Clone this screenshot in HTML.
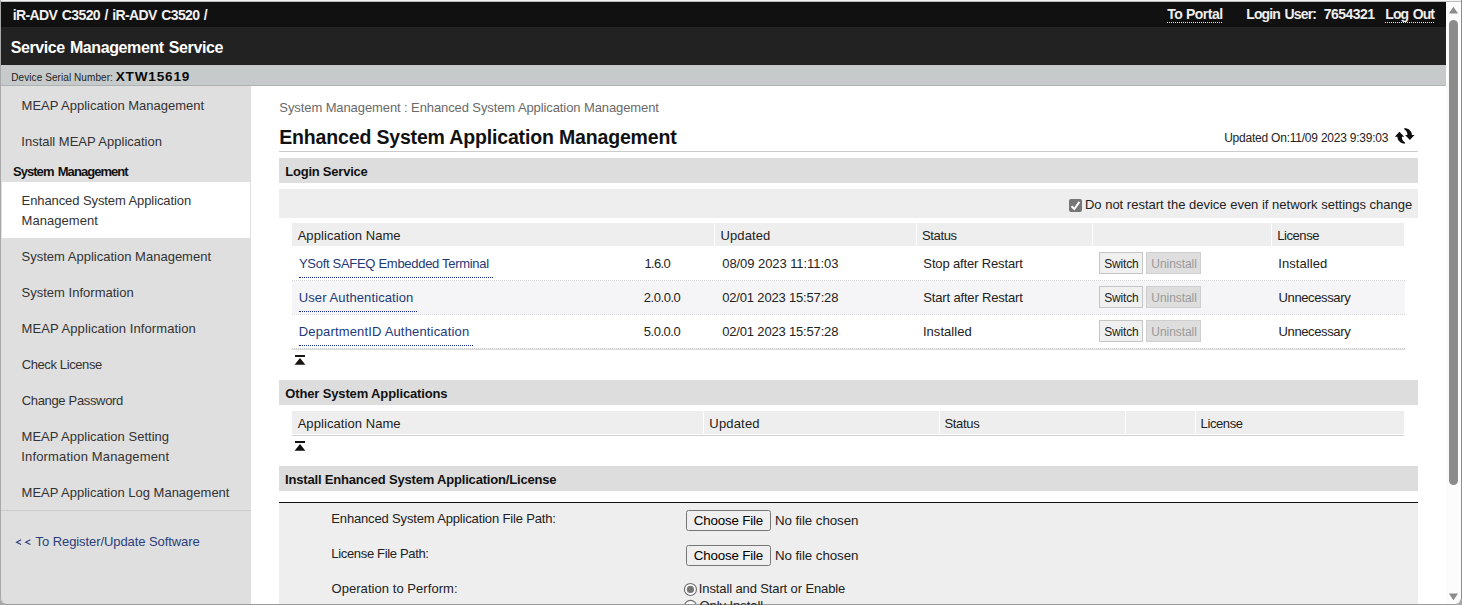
<!DOCTYPE html>
<html>
<head>
<meta charset="utf-8">
<title>Service Management Service</title>
<style>
html,body{margin:0;padding:0;}
body{width:1462px;height:605px;overflow:hidden;background:#fff;font-family:"Liberation Sans",sans-serif;}
#w{position:relative;width:1462px;height:605px;overflow:hidden;background:#fff;}
#w div,#w span,#w svg{position:absolute;box-sizing:border-box;}
.t{white-space:nowrap;font-family:"Liberation Sans",sans-serif;}
.btn{border:1px solid #c6c6c6;background:#f0f0f0;}
.btnd{border:1px solid #cfcfcf;background:#dedede;}
.fbtn{border:1px solid #767676;background:#efefef;border-radius:2.5px;}
.dul{height:1px;background:repeating-linear-gradient(90deg,#14298a 0,#14298a 1px,transparent 1px,transparent 2px);}
.dulw{height:1px;background:repeating-linear-gradient(90deg,#e4e4e4 0,#e4e4e4 1px,transparent 1px,transparent 2px);}
.rsep{height:1px;background:repeating-linear-gradient(90deg,#d8d8d8 0,#d8d8d8 1px,transparent 1px,transparent 2px);}
</style>
</head>
<body>
<div id="w">
<!-- header -->
<div style="left:0;top:2px;width:1446px;height:25px;background:#111111;"></div>
<div style="left:0;top:27px;width:1446px;height:38px;background:#222222;"></div>
<div style="left:0;top:65px;width:1446px;height:21px;background:#c6caca;border-bottom:1px solid #aeb2b2;"></div>
<div class="dulw" style="left:1167px;top:22px;width:55px;"></div>
<div class="dulw" style="left:1385px;top:22px;width:49px;"></div>
<!-- sidebar -->
<div style="left:0;top:86px;width:251px;height:519px;background:#dfdfdf;"></div>
<div style="left:2px;top:182px;width:248px;height:56px;background:#ffffff;"></div>
<div style="left:1px;top:510px;width:250px;height:1px;background:#cccccc;"></div>
<svg style="left:14px;top:537px;" width="18" height="10" viewBox="14 537 18 10"><path d="M21.1 539.8 L16.6 542.15 L21.1 544.5 M30.4 539.8 L25.7 542.15 L30.4 544.5" fill="none" stroke="#2a3f7c" stroke-width="1.1"/></svg>
<!-- main -->
<div style="left:279px;top:151px;width:1139px;height:1px;background:#cccccc;"></div>
<div style="left:279px;top:158px;width:1139px;height:25px;background:#dddddd;"></div>
<div style="left:279px;top:189px;width:1139px;height:29px;background:#eeeeee;"></div>
<!-- checkbox -->
<div style="left:1069px;top:199px;width:13px;height:13px;background:#767676;border-radius:2px;"></div>
<svg style="left:1069px;top:199px;" width="13" height="13" viewBox="0 0 13 13"><path d="M2.5 7.3 L5.3 10 L10.4 2.9" fill="none" stroke="#fff" stroke-width="2"/></svg>
<!-- table 1 header -->
<div style="left:292px;top:223px;width:1112px;height:23px;background:#eeeeee;"></div>
<div style="left:714px;top:223px;width:1px;height:23px;background:#fff;"></div>
<div style="left:916px;top:223px;width:1px;height:23px;background:#fff;"></div>
<div style="left:1092px;top:223px;width:1px;height:23px;background:#fff;"></div>
<div style="left:1271px;top:223px;width:1px;height:23px;background:#fff;"></div>
<!-- rows -->
<div style="left:292px;top:281px;width:1113px;height:33px;background:#f5f5f7;"></div>
<div class="rsep" style="left:292px;top:280px;width:1113px;"></div>
<div class="rsep" style="left:292px;top:314px;width:1113px;"></div>
<div class="rsep" style="left:292px;top:348px;width:1113px;background:repeating-linear-gradient(90deg,#c8c8c8 0,#c8c8c8 1px,transparent 1px,transparent 2px);"></div>
<div style="left:292px;top:349px;width:1113px;height:1px;background:#dadada;"></div>
<div style="left:299px;top:277px;width:1px;height:1px;background:#14298a;"></div>
<div class="dul" style="left:300px;top:277px;width:194px;"></div>
<div style="left:299px;top:311px;width:1px;height:1px;background:#14298a;"></div>
<div class="dul" style="left:300px;top:311px;width:118px;"></div>
<div style="left:299px;top:345px;width:1px;height:1px;background:#14298a;"></div>
<div class="dul" style="left:300px;top:345px;width:174px;"></div>
<!-- buttons -->
<div class="btn" style="left:1099px;top:252px;width:44px;height:22px;"></div>
<div class="btnd" style="left:1146px;top:252px;width:55px;height:22px;"></div>
<div class="btn" style="left:1099px;top:286px;width:44px;height:22px;"></div>
<div class="btnd" style="left:1146px;top:286px;width:55px;height:22px;"></div>
<div class="btn" style="left:1099px;top:320px;width:44px;height:22px;"></div>
<div class="btnd" style="left:1146px;top:320px;width:55px;height:22px;"></div>
<!-- up icons -->
<svg style="left:294px;top:355px;" width="12" height="11" viewBox="0 0 12 11"><path d="M1 0 H11 V2 H1 Z M6 3.1 L11.4 9.7 H0.6 Z" fill="#1a1410"/></svg>
<svg style="left:294px;top:441px;" width="12" height="11" viewBox="0 0 12 11"><path d="M1 0 H11 V2 H1 Z M6 3.1 L11.4 9.7 H0.6 Z" fill="#111"/></svg>
<!-- other -->
<div style="left:279px;top:380px;width:1139px;height:25px;background:#dddddd;"></div>
<div style="left:292px;top:411px;width:1112px;height:23px;background:#eeeeee;"></div>
<div style="left:292px;top:435px;width:1112px;height:1px;background:#d2d2d2;"></div>
<div style="left:703px;top:411px;width:1px;height:23px;background:#fff;"></div>
<div style="left:939px;top:411px;width:1px;height:23px;background:#fff;"></div>
<div style="left:1125px;top:411px;width:1px;height:23px;background:#fff;"></div>
<div style="left:1195px;top:411px;width:1px;height:23px;background:#fff;"></div>
<!-- install -->
<div style="left:279px;top:466px;width:1139px;height:25px;background:#dddddd;"></div>
<div style="left:279px;top:502px;width:1139px;height:1px;background:#111111;"></div>
<div style="left:279px;top:503px;width:1139px;height:102px;background:#eeeeee;"></div>
<div class="fbtn" style="left:686px;top:510px;width:85px;height:21px;"></div>
<div class="fbtn" style="left:686px;top:545px;width:85px;height:21px;"></div>
<!-- radios -->
<svg style="left:683px;top:582px;" width="15" height="23" viewBox="683 582 15 23">
<circle cx="690.45" cy="589.45" r="6" fill="#fff" stroke="#707070" stroke-width="1.15"/>
<circle cx="690.45" cy="589.45" r="3.6" fill="#767676"/>
<circle cx="690.45" cy="606.35" r="6" fill="#fff" stroke="#707070" stroke-width="1.15"/>
</svg>
<!-- refresh icon -->
<svg style="left:1394px;top:127px;" width="22" height="18" viewBox="1394 127 22 18">
<path d="M1399.4 131.8 L1404.2 136.7 H1401.9 C1401.8 139 1402.7 141 1404.9 142.2 L1404.9 143.7 C1400.5 143.3 1397.5 140.6 1397.4 136.7 H1394.8 Z" fill="#0c0c0c"/>
<path transform="rotate(180 1404.65 135.85)" d="M1399.4 131.8 L1404.2 136.7 H1401.9 C1401.8 139 1402.7 141 1404.9 142.2 L1404.9 143.7 C1400.5 143.3 1397.5 140.6 1397.4 136.7 H1394.8 Z" fill="#0c0c0c"/>
</svg>
<!-- scrollbar -->
<div style="left:1446px;top:2px;width:16px;height:603px;background:#fcfcfc;"></div>
<div style="left:1449px;top:20px;width:9px;height:465px;background:#8b8b8b;border-radius:4.5px;"></div>
<svg style="left:1448px;top:6px;" width="11" height="9" viewBox="0 0 11 9"><path d="M5.4 0.8 L10 7.6 H0.9 Z" fill="#8b8b8b"/></svg>
<svg style="left:1448px;top:592px;" width="11" height="9" viewBox="0 0 11 9"><path d="M5.4 8.2 L10 1.4 H0.9 Z" fill="#8b8b8b"/></svg>
<!-- window frame -->
<div style="left:0;top:0;width:1462px;height:1px;background:#f3f3f3;"></div>
<div style="left:0;top:1px;width:1462px;height:1px;background:#bdbdbd;"></div>
<div style="left:0;top:0;width:1462px;height:605px;border-left:1px solid #a8a8a8;border-right:1px solid #8c8c8c;border-bottom:1px solid #9a9a9a;border-radius:0 0 7px 7px;box-shadow:0 0 0 8px #a6a6a6;"></div>

<span class="t" style="left:12.81px;top:8.15px;font-size:14px;line-height:14px;color:#f2f2f2;font-weight:700;letter-spacing:-0.615px;word-spacing:1.2px;">iR-ADV C3520 / iR-ADV C3520 /</span>
<span class="t" style="left:10.70px;top:40.46px;font-size:16px;line-height:16px;color:#ffffff;font-weight:700;letter-spacing:-0.395px;word-spacing:1px;">Service Management Service</span>
<span class="t" style="left:1167.30px;top:7.15px;font-size:14px;line-height:14px;color:#eeeeee;font-weight:700;letter-spacing:-0.458px;">To Portal</span>
<span class="t" style="left:1246.23px;top:7.15px;font-size:14px;line-height:14px;color:#eeeeee;font-weight:700;letter-spacing:-0.860px;word-spacing:1.5px;">Login User:</span>
<span class="t" style="left:1323.73px;top:7.15px;font-size:14px;line-height:14px;color:#eeeeee;font-weight:700;letter-spacing:-0.514px;">7654321</span>
<span class="t" style="left:1385.23px;top:7.15px;font-size:14px;line-height:14px;color:#eeeeee;font-weight:700;letter-spacing:-0.890px;word-spacing:1.5px;">Log Out</span>
<span class="t" style="left:11.26px;top:72.53px;font-size:10px;line-height:10px;color:#222;letter-spacing:0.080px;">Device Serial Number:</span>
<span class="t" style="left:115.78px;top:69.55px;font-size:13.6px;line-height:13.6px;color:#0a0a0a;font-weight:700;letter-spacing:0.790px;">XTW15619</span>
<span class="t" style="left:21.57px;top:99.00px;font-size:13px;line-height:13px;color:#333;">MEAP Application Management</span>
<span class="t" style="left:21.31px;top:135.00px;font-size:13px;line-height:13px;color:#333;">Install MEAP Application</span>
<span class="t" style="left:12.92px;top:165.00px;font-size:13px;line-height:13px;color:#111;font-weight:700;letter-spacing:-0.939px;word-spacing:1.5px;">System Management</span>
<span class="t" style="left:21.57px;top:194.00px;font-size:13px;line-height:13px;color:#333;letter-spacing:-0.091px;">Enhanced System Application</span>
<span class="t" style="left:21.57px;top:214.00px;font-size:13px;line-height:13px;color:#333;letter-spacing:0.045px;">Management</span>
<span class="t" style="left:21.48px;top:250.00px;font-size:13px;line-height:13px;color:#333;letter-spacing:0.009px;">System Application Management</span>
<span class="t" style="left:21.48px;top:286.00px;font-size:13px;line-height:13px;color:#333;letter-spacing:0.016px;">System Information</span>
<span class="t" style="left:21.57px;top:322.00px;font-size:13px;line-height:13px;color:#333;letter-spacing:0.091px;">MEAP Application Information</span>
<span class="t" style="left:21.70px;top:358.00px;font-size:13px;line-height:13px;color:#333;letter-spacing:-0.392px;">Check License</span>
<span class="t" style="left:21.70px;top:394.00px;font-size:13px;line-height:13px;color:#333;letter-spacing:-0.329px;">Change Password</span>
<span class="t" style="left:21.57px;top:430.00px;font-size:13px;line-height:13px;color:#333;letter-spacing:0.012px;">MEAP Application Setting</span>
<span class="t" style="left:21.31px;top:450.00px;font-size:13px;line-height:13px;color:#333;letter-spacing:0.154px;">Information Management</span>
<span class="t" style="left:21.57px;top:486.00px;font-size:13px;line-height:13px;color:#333;">MEAP Application Log Management</span>
<span class="t" style="left:35.61px;top:535.00px;font-size:13px;line-height:13px;color:#2a3f7c;letter-spacing:-0.082px;">To Register/Update Software</span>
<span class="t" style="left:279.37px;top:101.00px;font-size:13px;line-height:13px;color:#6a6a6a;letter-spacing:-0.098px;">System Management : Enhanced System Application Management</span>
<span class="t" style="left:279.29px;top:128.49px;font-size:19.5px;line-height:19.5px;color:#111;font-weight:700;letter-spacing:-0.164px;">Enhanced System Application Management</span>
<span class="t" style="left:1224.17px;top:131.98px;font-size:12px;line-height:12px;color:#222;letter-spacing:-0.223px;">Updated On:11/09 2023 9:39:03</span>
<span class="t" style="left:285.23px;top:165.00px;font-size:13px;line-height:13px;color:#111;font-weight:700;letter-spacing:-0.222px;">Login Service</span>
<span class="t" style="left:1084.93px;top:198.00px;font-size:13px;line-height:13px;color:#222;">Do not restart the device even if network settings change</span>
<span class="t" style="left:297.64px;top:229.00px;font-size:13px;line-height:13px;color:#222;letter-spacing:0.071px;">Application Name</span>
<span class="t" style="left:720.54px;top:229.00px;font-size:13px;line-height:13px;color:#222;letter-spacing:0.101px;">Updated</span>
<span class="t" style="left:922.01px;top:229.00px;font-size:13px;line-height:13px;color:#222;letter-spacing:-0.370px;">Status</span>
<span class="t" style="left:1277.33px;top:229.00px;font-size:13px;line-height:13px;color:#222;letter-spacing:-0.451px;">License</span>
<span class="t" style="left:298.97px;top:257.00px;font-size:13px;line-height:13px;color:#223a7a;letter-spacing:-0.297px;">YSoft SAFEQ Embedded Terminal</span>
<span class="t" style="left:644.43px;top:257.00px;font-size:13px;line-height:13px;color:#222;letter-spacing:-0.630px;">1.6.0</span>
<span class="t" style="left:722.25px;top:257.00px;font-size:13px;line-height:13px;color:#222;letter-spacing:-0.068px;">08/09 2023 11:11:03</span>
<span class="t" style="left:923.37px;top:257.00px;font-size:13px;line-height:13px;color:#222;letter-spacing:-0.142px;">Stop after Restart</span>
<span class="t" style="left:1278.31px;top:257.00px;font-size:13px;line-height:13px;color:#222;letter-spacing:0.074px;">Installed</span>
<span class="t" style="left:1104.21px;top:257.84px;font-size:12px;line-height:12px;color:#222;letter-spacing:-0.181px;">Switch</span>
<span class="t" style="left:1151.35px;top:257.84px;font-size:12px;line-height:12px;color:#9a9a9a;letter-spacing:-0.059px;">Uninstall</span>
<span class="t" style="left:298.74px;top:291.00px;font-size:13px;line-height:13px;color:#223a7a;letter-spacing:0.104px;">User Authentication</span>
<span class="t" style="left:643.77px;top:291.00px;font-size:13px;line-height:13px;color:#222;letter-spacing:-0.453px;">2.0.0.0</span>
<span class="t" style="left:722.25px;top:291.00px;font-size:13px;line-height:13px;color:#222;letter-spacing:-0.174px;">02/01 2023 15:57:28</span>
<span class="t" style="left:923.37px;top:291.00px;font-size:13px;line-height:13px;color:#222;letter-spacing:-0.173px;">Start after Restart</span>
<span class="t" style="left:1278.54px;top:291.00px;font-size:13px;line-height:13px;color:#222;letter-spacing:-0.376px;">Unnecessary</span>
<span class="t" style="left:1104.21px;top:291.84px;font-size:12px;line-height:12px;color:#222;letter-spacing:-0.181px;">Switch</span>
<span class="t" style="left:1151.35px;top:291.84px;font-size:12px;line-height:12px;color:#9a9a9a;letter-spacing:-0.059px;">Uninstall</span>
<span class="t" style="left:298.76px;top:325.00px;font-size:13px;line-height:13px;color:#223a7a;letter-spacing:0.160px;">DepartmentID Authentication</span>
<span class="t" style="left:643.75px;top:325.00px;font-size:13px;line-height:13px;color:#222;letter-spacing:-0.466px;">5.0.0.0</span>
<span class="t" style="left:722.25px;top:325.00px;font-size:13px;line-height:13px;color:#222;letter-spacing:-0.174px;">02/01 2023 15:57:28</span>
<span class="t" style="left:922.90px;top:325.00px;font-size:13px;line-height:13px;color:#222;letter-spacing:0.059px;">Installed</span>
<span class="t" style="left:1278.54px;top:325.00px;font-size:13px;line-height:13px;color:#222;letter-spacing:-0.376px;">Unnecessary</span>
<span class="t" style="left:1104.21px;top:325.84px;font-size:12px;line-height:12px;color:#222;letter-spacing:-0.181px;">Switch</span>
<span class="t" style="left:1151.35px;top:325.84px;font-size:12px;line-height:12px;color:#9a9a9a;letter-spacing:-0.059px;">Uninstall</span>
<span class="t" style="left:285.31px;top:387.00px;font-size:13px;line-height:13px;color:#111;font-weight:700;letter-spacing:-0.142px;">Other System Applications</span>
<span class="t" style="left:297.64px;top:417.00px;font-size:13px;line-height:13px;color:#222;letter-spacing:0.071px;">Application Name</span>
<span class="t" style="left:709.33px;top:417.00px;font-size:13px;line-height:13px;color:#222;letter-spacing:0.173px;">Updated</span>
<span class="t" style="left:944.48px;top:417.00px;font-size:13px;line-height:13px;color:#222;letter-spacing:-0.339px;">Status</span>
<span class="t" style="left:1200.57px;top:417.00px;font-size:13px;line-height:13px;color:#222;letter-spacing:-0.402px;">License</span>
<span class="t" style="left:285.07px;top:473.00px;font-size:13px;line-height:13px;color:#111;font-weight:700;letter-spacing:-0.181px;">Install Enhanced System Application/License</span>
<span class="t" style="left:331.33px;top:511.50px;font-size:13px;line-height:13px;color:#222;letter-spacing:-0.160px;">Enhanced System Application File Path:</span>
<span class="t" style="left:331.33px;top:547.00px;font-size:13px;line-height:13px;color:#222;letter-spacing:-0.338px;">License File Path:</span>
<span class="t" style="left:331.53px;top:582.00px;font-size:13px;line-height:13px;color:#222;letter-spacing:0.051px;">Operation to Perform:</span>
<span class="t" style="left:693.66px;top:513.72px;font-size:13.33px;line-height:13.33px;color:#000;letter-spacing:-0.149px;">Choose File</span>
<span class="t" style="left:774.97px;top:513.72px;font-size:13.33px;line-height:13.33px;color:#222;letter-spacing:-0.081px;">No file chosen</span>
<span class="t" style="left:693.66px;top:548.72px;font-size:13.33px;line-height:13.33px;color:#000;letter-spacing:-0.149px;">Choose File</span>
<span class="t" style="left:774.97px;top:548.72px;font-size:13.33px;line-height:13.33px;color:#222;letter-spacing:-0.081px;">No file chosen</span>
<span class="t" style="left:698.86px;top:582.00px;font-size:13px;line-height:13px;color:#222;letter-spacing:-0.122px;">Install and Start or Enable</span>
<span class="t" style="left:699.53px;top:599.20px;font-size:13px;line-height:13px;color:#222;letter-spacing:-0.059px;">Only Install</span>
</div>
</body>
</html>
